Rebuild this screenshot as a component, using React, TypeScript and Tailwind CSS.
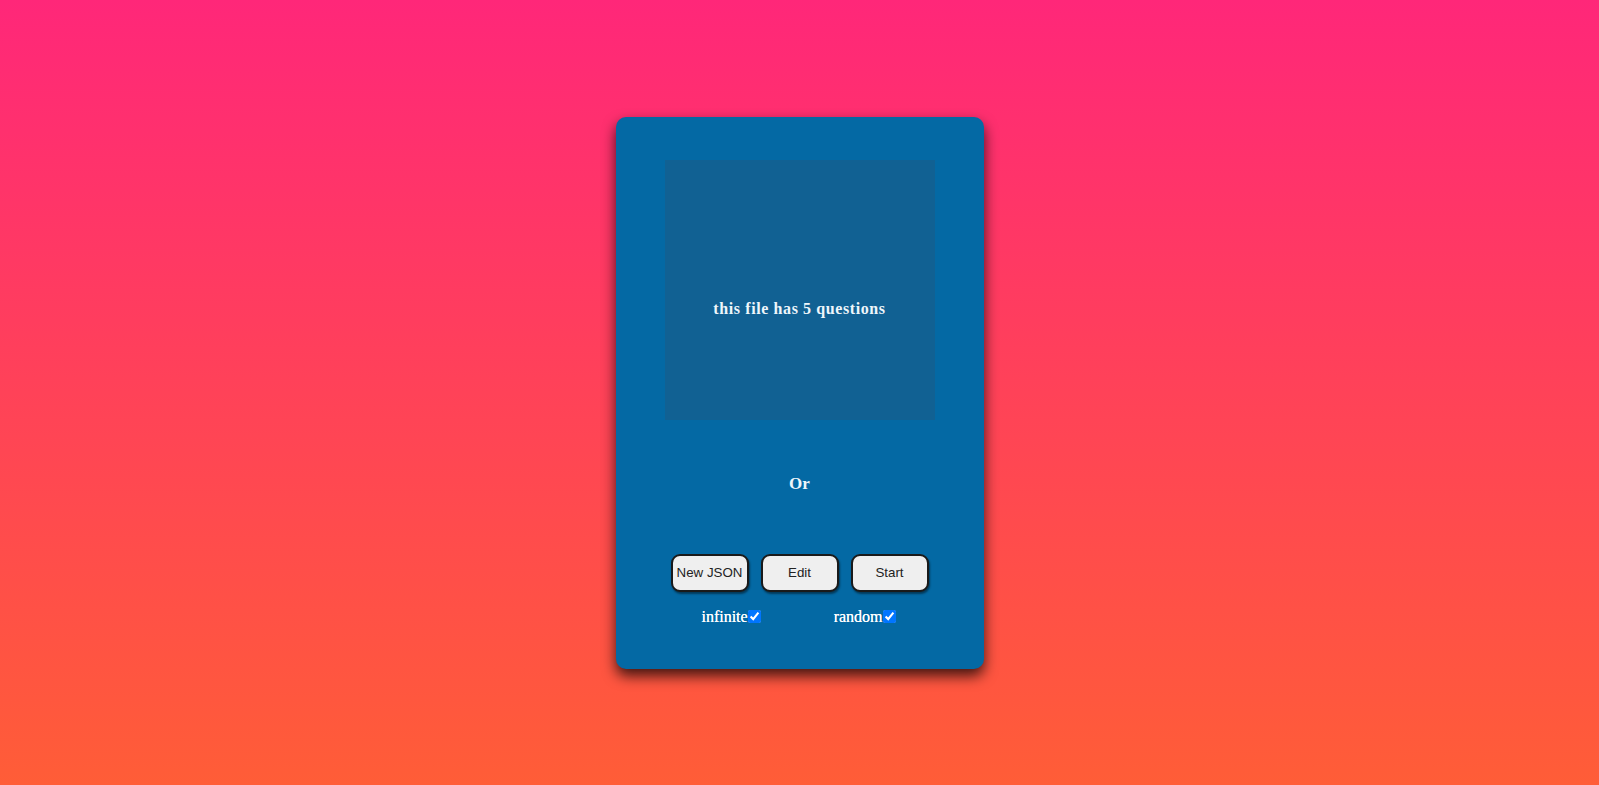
import { useState } from 'react'

/* ── Quiz loader card ─────────────────────────────────────────────────────── */

const buttonClasses = `
  w-[78px] h-[38px] rounded-[9px] border-2 border-[#1a1a1a]
  bg-[#efefef] text-[13.33px] text-[#222] font-['Liberation_Sans',Arial,sans-serif]
  shadow-[1px_2px_2px_rgba(0,0,0,0.45)]
`

function Toggle({ label, checked, onChange }: {
  label    : string
  checked  : boolean
  onChange : (v: boolean) => void
}) {
  return (
    <label className="flex items-center text-[16px] text-white [text-shadow:0_0_0.6px_#fff]">
      {label}
      <input
        type="checkbox"
        checked={checked}
        onChange={(e) => onChange(e.target.checked)}
        className="m-0 w-[13px] h-[13px] accent-[#0075ff]"
      />
    </label>
  )
}

export default function App() {
  const [infinite, setInfinite] = useState(true)
  const [random, setRandom] = useState(true)

  return (
    <div
      className="w-full h-[785px] flex items-center justify-center
                 bg-[linear-gradient(to_bottom,#ff2779,#ff5d37)]
                 font-['Liberation_Serif','Times_New_Roman',serif]"
    >
      <div
        className="w-[368px] h-[552px] rounded-[10px] bg-[#0469a4]
                   shadow-[0_7px_14px_rgba(0,0,0,0.75)]
                   flex flex-col items-center pt-[43px]"
      >
        {/* Drop zone */}
        <div className="w-[270px] h-[260px] bg-[#116193] flex items-center justify-center pt-[38px]">
          <span className="text-[16px] font-bold tracking-[0.6px] text-[#eef6fb]">
            this file has 5 questions
          </span>
        </div>

        <div className="mt-[55px] text-[17px] font-bold text-[#eef6fb] leading-none">Or</div>

        {/* Actions */}
        <div className="mt-[62px] flex gap-[12px]">
          <button type="button" className={buttonClasses}>New JSON</button>
          <button type="button" className={buttonClasses}>Edit</button>
          <button type="button" className={buttonClasses}>Start</button>
        </div>

        <div className="mt-[13px] flex gap-[73px] pr-[2px]">
          <Toggle label="infinite" checked={infinite} onChange={setInfinite} />
          <Toggle label="random" checked={random} onChange={setRandom} />
        </div>
      </div>
    </div>
  )
}
